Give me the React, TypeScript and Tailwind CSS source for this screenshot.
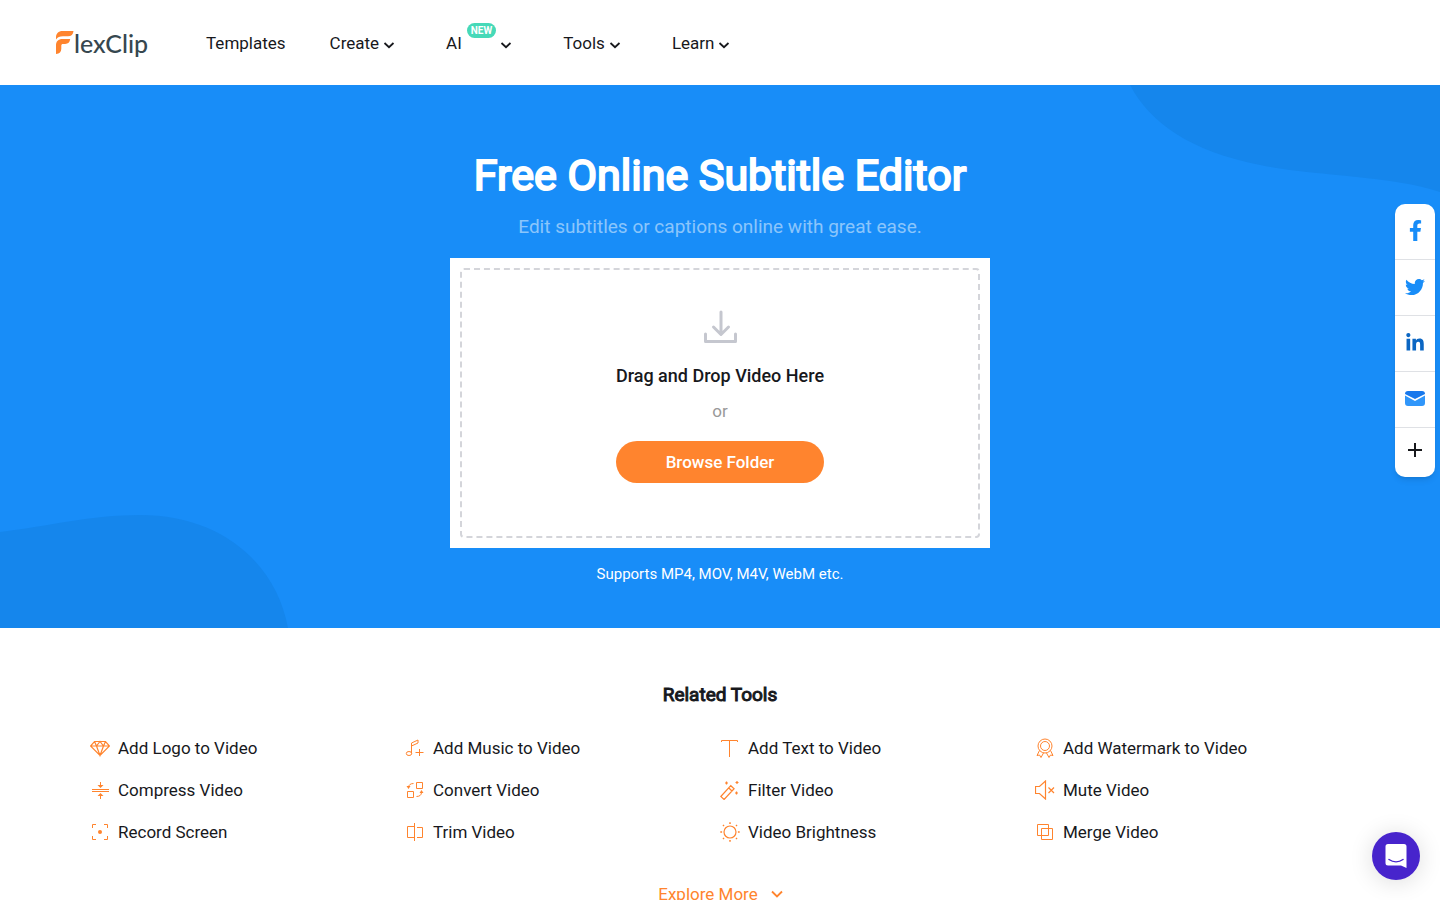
import type { ReactNode } from "react";
import { FaFacebookF, FaLinkedinIn, FaTwitter } from "react-icons/fa";

const navItems = [
  { label: "Create" },
  { label: "AI", badge: "NEW" },
  { label: "Tools" },
  { label: "Learn" },
];

const tools: { name: string; icon: ReactNode }[] = [
  {
    name: "Add Logo to Video",
    icon: <path strokeWidth="1.2" d="M4.5 3.5h11l4 4.5L10 17.5.5 8zM.5 8h19M4.5 3.5 6.5 8 10 17.5 13.5 8l2-4.5M6.5 8 10 3.5 13.5 8" />,
  },
  {
    name: "Add Music to Video",
    icon: (
      <>
        <path d="M6.5 15.5V5L13 2v3L6.5 8M10.5 14.5h8M14.5 11v7" />
        <ellipse cx="4" cy="15.5" rx="2.7" ry="2" />
      </>
    ),
  },
  { name: "Add Text to Video", icon: <path d="M1.5 4V2.5h16V4M9.5 2.5V19" /> },
  {
    name: "Add Watermark to Video",
    icon: (
      <>
        <circle cx="10" cy="8" r="7" />
        <circle cx="10" cy="8" r="4.5" />
        <path d="M4.5 12.5 2 17.5l2.5-.5L6 19.5l2.5-4.5M15.5 12.5l2.5 5-2.5-.5-1.500 2.5-2.5-4.5" />
      </>
    ),
  },
  {
    name: "Compress Video",
    icon: (
      <>
        <path d="M2 9.5h17M2 11.5h17M10.500 2v4M10.500 15v4" />
        <path d="M7.5 5h6l-3 3zM7.5 16h6l-3-3z" fill="currentColor" stroke="none" />
      </>
    ),
  },
  {
    name: "Convert Video",
    icon: (
      <>
        <path d="M11.5 2.5h6v6h-6zM2.5 11.5h6v6h-6zM3.5 7.500c0-2.500 2-4 5-4M16.5 12.5c0 2.500-2 4-5 4" />
        <path d="M1.5 6h4l-2 3zM14.5 13h4l-2-3z" fill="currentColor" stroke="none" />
      </>
    ),
  },
  {
    name: "Filter Video",
    icon: (
      <path
        strokeWidth="1.2"
        d="m.8 16.5 10-10.800 3.300 3-10 10.800zM8.800 8l3.200 3M6.500 1.500v3M5 3h3M17 1v3M15.500 2.500h3M16.500 11.500v3M15 13h3"
      />
    ),
  },
  { name: "Mute Video", icon: <path strokeWidth="1.2" d="M.5 6.5h4l6-5.500v18l-6-5.500h-4zM13.500 7.500l5.500 5.500M19 7.500 13.500 13" /> },
  {
    name: "Record Screen",
    icon: (
      <>
        <path d="M2.5 6V2.5H6M14 2.5h3.5V6M17.5 14v3.5H14M6 17.5H2.5V14" />
        <circle cx="10" cy="10" r="2" fill="currentColor" stroke="none" />
      </>
    ),
  },
  { name: "Trim Video", icon: <path d="M9.5 1v18M9.5 4.5h-7v11h7M12 5.5h5.5v10H12" /> },
  {
    name: "Video Brightness",
    icon: (
      <>
        <circle cx="10" cy="10" r="6" strokeWidth="1.2" />
        <path strokeWidth="1.5" d="M10 .3v1.800M10 17.900v1.800M.3 10h1.800M17.900 10h1.800M3 3l1 1M16 16l1 1M3 17l1-1M16 4l1-1" />
      </>
    ),
  },
  { name: "Merge Video", icon: <path d="M2.5 2.5h11v11h-11zM6.5 6.5h11v11h-11z" /> },
];

function Chevron() {
  return (
    <svg viewBox="0 0 18 18" className="size-[18px]" fill="none" stroke="currentColor" strokeWidth="1.8" aria-hidden>
      <path d="m4.500 9 4.500 4.200L13.500 9" />
    </svg>
  );
}

function Logo() {
  return (
    <a href="#" aria-label="FlexClip" className="flex items-center">
      <svg viewBox="0 0 18 24" className="h-6 w-[18px]" fill="#ff842e" aria-hidden>
        <path d="M0 6.500C0 2.500 2.500 0 6.500 0H17.500c-.3 3.500-2.200 5.200-5.500 5.200H7C3.500 5.200 1.500 6 0 8.500z" />
        <path d="M0 14.500C0 10.200 2.300 8 6.500 8h7.700c-.5 3.300-2 4.900-5 4.900H7c-1.200 0-1.700.6-1.700 1.900v3c0 3.200-1.700 4.900-5.300 5.200z" />
      </svg>
      <span className="font-[Lato,sans-serif] text-[25px] leading-8 font-medium text-[#36474f]">lexClip</span>
    </a>
  );
}

function Header() {
  return (
    <header className="flex h-[85px] items-center gap-[58px] bg-white px-14">
      <Logo />
      <nav className="flex items-center gap-11 text-[17px] leading-6">
        <a href="#">Templates</a>
        {navItems.map((item) => (
          <button key={item.label} type="button" className="flex items-center gap-px pr-1">
            {item.label}
            {item.badge ? (
              <span className="mb-6 ml-1 rounded-full bg-[#46d9b8] px-1 text-[10px] leading-[15px] font-bold text-white">
                {item.badge}
              </span>
            ) : null}
            <Chevron />
          </button>
        ))}
      </nav>
    </header>
  );
}

function Hero() {
  return (
    <section className="relative overflow-hidden bg-[#188df8] px-6 pt-16 pb-[42px] text-center text-white">
      <svg viewBox="0 0 310 110" className="absolute top-0 right-0 w-[310px]" fill="#1586ec" aria-hidden>
        <path d="M0 0C20 38 60 66 130 80C180 91 260 90 310 107V0z" />
      </svg>
      <svg viewBox="0 0 290 116" className="absolute bottom-0 left-0 w-[290px]" fill="#1586ec" aria-hidden>
        <path d="M0 20C50 14 90 3 140 3C220 3 276 50 288 116H0z" />
      </svg>
      <div className="relative flex flex-col items-center">
        <h1 className="text-[43px] leading-[52px] font-normal [-webkit-text-stroke:2px_currentColor]">
          Free Online Subtitle Editor
        </h1>
        <p className="mt-2.5 text-[19px] leading-8 text-white/50">Edit subtitles or captions online with great ease.</p>
        <div className="mt-[15px] w-full max-w-[540px] bg-white p-2.5">
          <div className="flex flex-col items-center rounded border-2 border-dashed border-[#d4d5da] pt-10 pb-[53px]">
            <svg viewBox="0 0 34 34" className="size-[34px]" fill="none" stroke="#c5c7cf" strokeWidth="3" strokeLinecap="round" strokeLinejoin="round" aria-hidden>
              <path d="M18 2v22M10.500 17l7.500 7.500 7.500-7.500M2.500 24v7.500h30V24" />
            </svg>
            <p className="mt-5 text-lg leading-6 font-medium text-[#17181c]">Drag and Drop Video Here</p>
            <p className="mt-[11px] text-[17px] leading-6 text-[#999]">or</p>
            <button type="button" className="mt-[18px] h-[42px] w-[208px] rounded-full bg-[#ff842e] text-[17px] leading-6 font-medium text-white">
              Browse Folder
            </button>
          </div>
        </div>
        <p className="mt-3.5 text-[15px] leading-6 text-white">Supports MP4, MOV, M4V, WebM etc.</p>
      </div>
    </section>
  );
}

function RelatedTools() {
  return (
    <section className="mx-auto max-w-[1260px] pt-[55px] pb-10">
      <h2 className="text-center text-[19px] leading-6 font-normal [-webkit-text-stroke:1px_currentColor]">Related Tools</h2>
      <ul className="mt-[29px] grid grid-cols-4 gap-y-[18px]">
        {tools.map((tool) => (
          <li key={tool.name}>
            <a href="#" className="flex items-center gap-2 text-[17px] leading-6">
              <svg viewBox="0 0 20 20" className="size-5 text-[#ff842e]" fill="none" stroke="currentColor" aria-hidden>
                {tool.icon}
              </svg>
              {tool.name}
            </a>
          </li>
        ))}
      </ul>
      <button type="button" className="mx-auto mt-[38px] flex items-center gap-2.5 pl-1 text-[17px] leading-6 text-[#ff842e]">
        Explore More
        <svg viewBox="0 0 18 18" className="size-[18px]" fill="none" stroke="currentColor" strokeWidth="1.8" aria-hidden>
          <path d="m4 6.500 5 5 5-5" />
        </svg>
      </button>
    </section>
  );
}

function ShareBar() {
  return (
    <aside aria-label="Share" className="fixed top-[204px] right-[5px] w-10 divide-y divide-[#dfe1e5] overflow-hidden rounded-[10px] bg-white shadow-md">
      <a href="#" aria-label="Facebook" className="grid h-14 place-items-center pb-0.5 text-[#188df8]">
        <FaFacebookF size={21} aria-hidden />
      </a>
      <a href="#" aria-label="Twitter" className="grid h-14 place-items-center pb-0.5 text-[#188df8]">
        <FaTwitter size={20} aria-hidden />
      </a>
      <a href="#" aria-label="LinkedIn" className="grid h-14 place-items-center pb-0.5 text-[#0b66c3]">
        <FaLinkedinIn size={20} aria-hidden />
      </a>
      <a href="#" aria-label="Email" className="grid h-14 place-items-center pb-0.5">
        <svg viewBox="0 0 20 16" className="h-4 w-5" aria-hidden>
          <path d="M3 0h14a3 3 0 0 1 3 3L10 8 0 3a3 3 0 0 1 3-3z" fill="#1878ec" />
          <path d="M0 4.500 10 10l10-5.500V12a3 3 0 0 1-3 3H3a3 3 0 0 1-3-3z" fill="#3096fa" />
        </svg>
      </a>
      <button type="button" aria-label="More" className="grid h-[49px] w-full place-items-center pb-1.5">
        <svg viewBox="0 0 14 14" className="size-3.5" stroke="#17181c" strokeWidth="2" aria-hidden>
          <path d="M7 0v14M0 7h14" />
        </svg>
      </button>
    </aside>
  );
}

function ChatButton() {
  return (
    <button
      type="button"
      aria-label="Open chat"
      className="fixed right-5 bottom-5 grid size-12 place-items-center rounded-full bg-[#4724cc] shadow-[0_2px_24px_rgba(0,0,0,0.14)]"
    >
      <svg viewBox="0 0 22 24" className="h-6 w-[22px]" aria-hidden>
        <path d="M3 0h16a2.500 2.500 0 0 1 2.500 2.500V24l-5.500-2.500H3A2.500 2.500 0 0 1 .5 19V2.500A2.500 2.500 0 0 1 3 0z" fill="#fff" />
        <path d="M4 15.500c4.200 3 9.800 3 14 0" fill="none" stroke="#4724cc" strokeWidth="1.5" strokeLinecap="round" />
      </svg>
    </button>
  );
}

export default function App() {
  return (
    <div className="min-h-screen bg-white font-[Roboto,sans-serif] text-[#17181c]">
      <Header />
      <main>
        <Hero />
        <RelatedTools />
      </main>
      <ShareBar />
      <ChatButton />
    </div>
  );
}
